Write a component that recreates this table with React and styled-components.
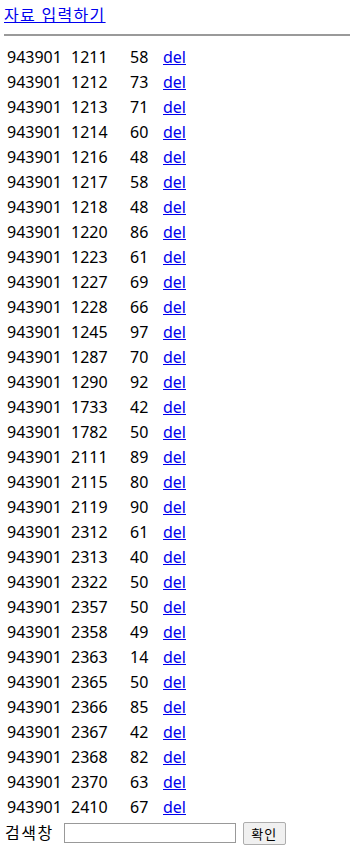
import React from "react";
import styled, { createGlobalStyle } from "styled-components";

const rows = [
  [1211, 58], [1212, 73], [1213, 71], [1214, 60], [1216, 48], [1217, 58],
  [1218, 48], [1220, 86], [1223, 61], [1227, 69], [1228, 66], [1245, 97],
  [1287, 70], [1290, 92], [1733, 42], [1782, 50], [2111, 89], [2115, 80],
  [2119, 90], [2312, 61], [2313, 40], [2322, 50], [2357, 50], [2358, 49],
  [2363, 14], [2365, 50], [2366, 85], [2367, 42], [2368, 82], [2370, 63],
  [2410, 67],
];

const GlobalStyle = createGlobalStyle`
  body {
    margin: 5px 0 0 4px;
    font-family: "Noto Sans", "Noto Sans CJK KR", sans-serif;
    font-size: 16px;
    line-height: 21px;
    color: #000;
    background: #fff;
  }
`;

const Link = styled.a`
  color: #0000ee;
  text-decoration: underline;
  cursor: pointer;
  letter-spacing: ${(p) => (p.$wide ? "1.3px" : "0")};
`;

const Rule = styled.hr`
  margin: 8px 0;
  border: 0;
  height: 2px;
  background: #9a9a9a;
`;

const Table = styled.table`
  border-spacing: 2px;
  border-collapse: separate;
  font-size: 16px;
  line-height: 21px;
`;

const Cell = styled.td`
  padding: 1px;
  width: ${(p) => p.$w}px;
  white-space: nowrap;
`;

const Search = styled.form`
  display: flex;
  align-items: center;
  margin: 0;
  height: 24px;
`;

const Label = styled.span`
  letter-spacing: 1.5px;
  margin-left: 1px;
  margin-right: 10px;
`;

const Input = styled.input`
  width: 168px;
  height: 16px;
  padding: 1px;
  border: 1px solid #999;
  margin: 0 7px 0 0;
`;

const Button = styled.button`
  height: 23px;
  width: 43px;
  padding: 0;
  font-family: "Noto Sans CJK KR", sans-serif;
  font-size: 13px;
  letter-spacing: 1px;
  background: #f0f0f0;
  border: 1px solid #adadad;
  border-radius: 2px;
`;

export default function App() {
  return (
    <>
      <GlobalStyle />
      <Link $wide>자료 입력하기</Link>
      <Rule />
      <Table>
        <tbody>
          {rows.map(([id, score]) => (
            <tr key={id}>
              <Cell $w={60}>943901</Cell>
              <Cell $w={55}>{id}</Cell>
              <Cell $w={29}>{score}</Cell>
              <Cell>
                <Link>del</Link>
              </Cell>
            </tr>
          ))}
        </tbody>
      </Table>
      <Search onSubmit={(e) => e.preventDefault()}>
        <Label>검색창</Label>
        <Input type="text" />
        <Button type="submit">확인</Button>
      </Search>
    </>
  );
}
